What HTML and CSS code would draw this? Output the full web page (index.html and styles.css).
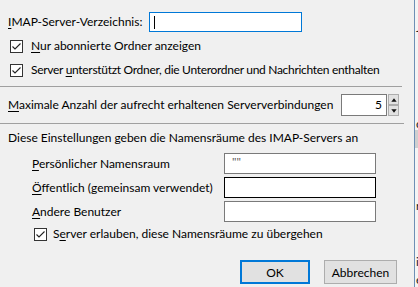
FILE: index.html
```html
<!DOCTYPE html>
<html lang="de">
<head>
<meta charset="utf-8">
<link rel="stylesheet" href="styles.css">
</head>
<body>
<div class="screen">
  <div class="dialog">
    <div class="row r-dir">
      <span class="label dir-label"><u>I</u>MAP-Server-Verzeichnis:</span>
      <div class="input focus dir"><span class="caret"></span></div>
    </div>
    <div class="row r-check1">
      <span class="cb"><svg width="13" height="13" viewBox="0 0 13 13"><path d="M2.5 6.5 L5 9 L10.5 3.5" fill="none" stroke="#222" stroke-width="1.1"/></svg></span>
      <span class="label"><u>N</u>ur abonnierte Ordner anzeigen</span>
    </div>
    <div class="row r-check2">
      <span class="cb"><svg width="13" height="13" viewBox="0 0 13 13"><path d="M2.5 6.5 L5 9 L10.5 3.5" fill="none" stroke="#222" stroke-width="1.1"/></svg></span>
      <span class="label tight">Server <u>u</u>nterstützt Ordner, die Unterordner und Nachrichten enthalten</span>
    </div>
    <div class="sep s1"></div>
    <div class="row r-max">
      <span class="label"><u>M</u>aximale Anzahl der aufrecht erhaltenen Serververbindungen</span>
      <div class="spin">
        <div class="input num">5</div>
        <div class="arrows">
          <span class="arr"><svg width="9" height="9" viewBox="0 0 9 9"><path d="M1.5 6.5 L4.5 2.5 L7.5 6.5 Z" fill="#111"/></svg></span>
          <span class="arr"><svg width="9" height="9" viewBox="0 0 9 9"><path d="M1.5 2.5 L4.5 6.5 L7.5 2.5 Z" fill="#111"/></svg></span>
        </div>
      </div>
    </div>
    <div class="sep s2"></div>
    <div class="row r-info">
      <span class="label">Diese Einstellungen geben die Namensräume des IMAP-Servers an</span>
    </div>
    <div class="ns">
      <div class="row r-ns">
        <span class="label"><u>P</u>ersönlicher Namensraum</span>
        <div class="input ns-in"><span class="q">""</span></div>
      </div>
      <div class="row r-ns">
        <span class="label"><u>Ö</u>ffentlich (gemeinsam verwendet)</span>
        <div class="input ns-in dark"></div>
      </div>
      <div class="row r-ns">
        <span class="label"><u>A</u>ndere Benutzer</span>
        <div class="input ns-in"></div>
      </div>
      <div class="row r-check3">
        <span class="cb"><svg width="13" height="13" viewBox="0 0 13 13"><path d="M2.5 6.5 L5 9 L10.5 3.5" fill="none" stroke="#222" stroke-width="1.1"/></svg></span>
        <span class="label">S<u>e</u>rver erlauben, diese Namensräume zu übergehen</span>
      </div>
    </div>
    <div class="buttons">
      <div class="btn default">OK</div>
      <div class="btn">Abbrechen</div>
    </div>
  </div>
  <div class="behind">
    <span class="g g1">J</span>
    <span class="g g2">d</span>
    <span class="band"></span>
    <span class="g g3">r</span>
    <span class="g g4">i</span>
    <span class="g g5">e</span>
  </div>
</div>
</body>
</html>
```
FILE: styles.css
```css
html, body {
  margin: 0;
  padding: 0;
  background: #f0f0f0;
}
.screen {
  width: 418px;
  height: 287px;
  display: flex;
  overflow: hidden;
  position: relative;
  font-family: Lato, "Noto Sans", sans-serif;
  font-size: 12px;
  color: #000;
}
.dialog {
  width: 414px;
  flex: none;
  display: flex;
  flex-direction: column;
  background: #f0f0f0;
}
u {
  text-decoration: underline;
  text-underline-offset: 2px;
  text-decoration-thickness: 1px;
}
.row {
  display: flex;
  align-items: center;
  white-space: nowrap;
}
.label { line-height: 16px; }
.tight { letter-spacing: -0.3px; }
.input {
  box-sizing: border-box;
  background: #fff;
  border: 1px solid #7a7a7a;
  flex: none;
}
.input.focus { border-color: #0078d7; }
.input.dark { border-color: #000; }

.r-dir { margin-top: 12px; height: 20px; padding-left: 8px; }
.dir-label { width: 141px; flex: none; }
.dir { width: 153px; height: 20px; position: relative; }
.caret {
  position: absolute;
  left: 4px; top: 3px;
  width: 1px; height: 13px;
  background: #000;
}
.cb {
  width: 13px; height: 13px;
  box-sizing: border-box;
  border: 1px solid #333;
  background: #fff;
  display: flex;
  flex: none;
}
.cb svg { margin: -1px; }
.r-check1 { margin-top: 2px; height: 24px; padding-left: 10px; }
.r-check2 { height: 24px; padding-left: 10px; }
.r-check1 .label, .r-check2 .label { margin-left: 8px; }

.sep {
  height: 1px;
  background: #a0a0a0;
  flex: none;
}
.s1 { width: 402px; margin-top: 4px; }
.s2 { width: 404px; margin-top: 7px; }

.r-max { margin-top: 7px; height: 22px; padding-left: 8px; }
.spin { display: flex; margin-left: auto; margin-right: 15px; height: 22px; flex: none; }
.num {
  width: 46px; height: 22px;
  text-align: right;
  padding-right: 4px;
  line-height: 19px;
}
.arrows {
  width: 11px;
  display: flex;
  flex-direction: column;
  margin-left: 1px;
}
.arr {
  flex: 1;
  box-sizing: border-box;
  border: 1px solid #adadad;
  background: #e1e1e1;
  display: flex;
  align-items: center;
  justify-content: center;
}
.arr svg { width: 8px; height: 8px; }

.r-info { margin-top: 6px; height: 16px; padding-left: 8px; }

.ns { padding-left: 32px; display: flex; flex-direction: column; margin-top: 7px; }
.r-ns { height: 21px; margin-bottom: 3px; }
.ns-in { width: 152px; height: 21px; margin-left: auto; margin-right: 38px; }
.q { color: #555; font-family: "Noto Sans", sans-serif; font-size: 11px; padding-left: 7px; line-height: 16px; }
.r-check3 { height: 16px; padding-left: 2px; margin-top: 1px; }
.r-check3 .label { margin-left: 6px; }

.buttons {
  display: flex;
  justify-content: flex-end;
  gap: 14px;
  margin-top: 18px;
  padding-right: 17px;
}
.btn {
  box-sizing: border-box;
  height: 24px;
  border: 1px solid #adadad;
  background: #e1e1e1;
  display: flex;
  align-items: center;
  justify-content: center;
  width: 73px;
}
.btn.default {
  width: 70px;
  border: 2px solid #0078d7;
}

.behind {
  flex: 1;
  border-left: 1px solid #6d8fb5;
  background: #f4f4f4;
  position: relative;
}
.g {
  position: absolute;
  left: 1px;
  font-size: 12px;
  color: #222;
  line-height: 12px;
}
.g1 { top: 22px; }
.g2 { top: 118px; }
.band { position: absolute; left: 0; top: 130px; width: 4px; height: 18px; background: #cfcfcf; }
.g3 { top: 200px; }
.g4 { top: 256px; }
.g5 { top: 274px; }
```
